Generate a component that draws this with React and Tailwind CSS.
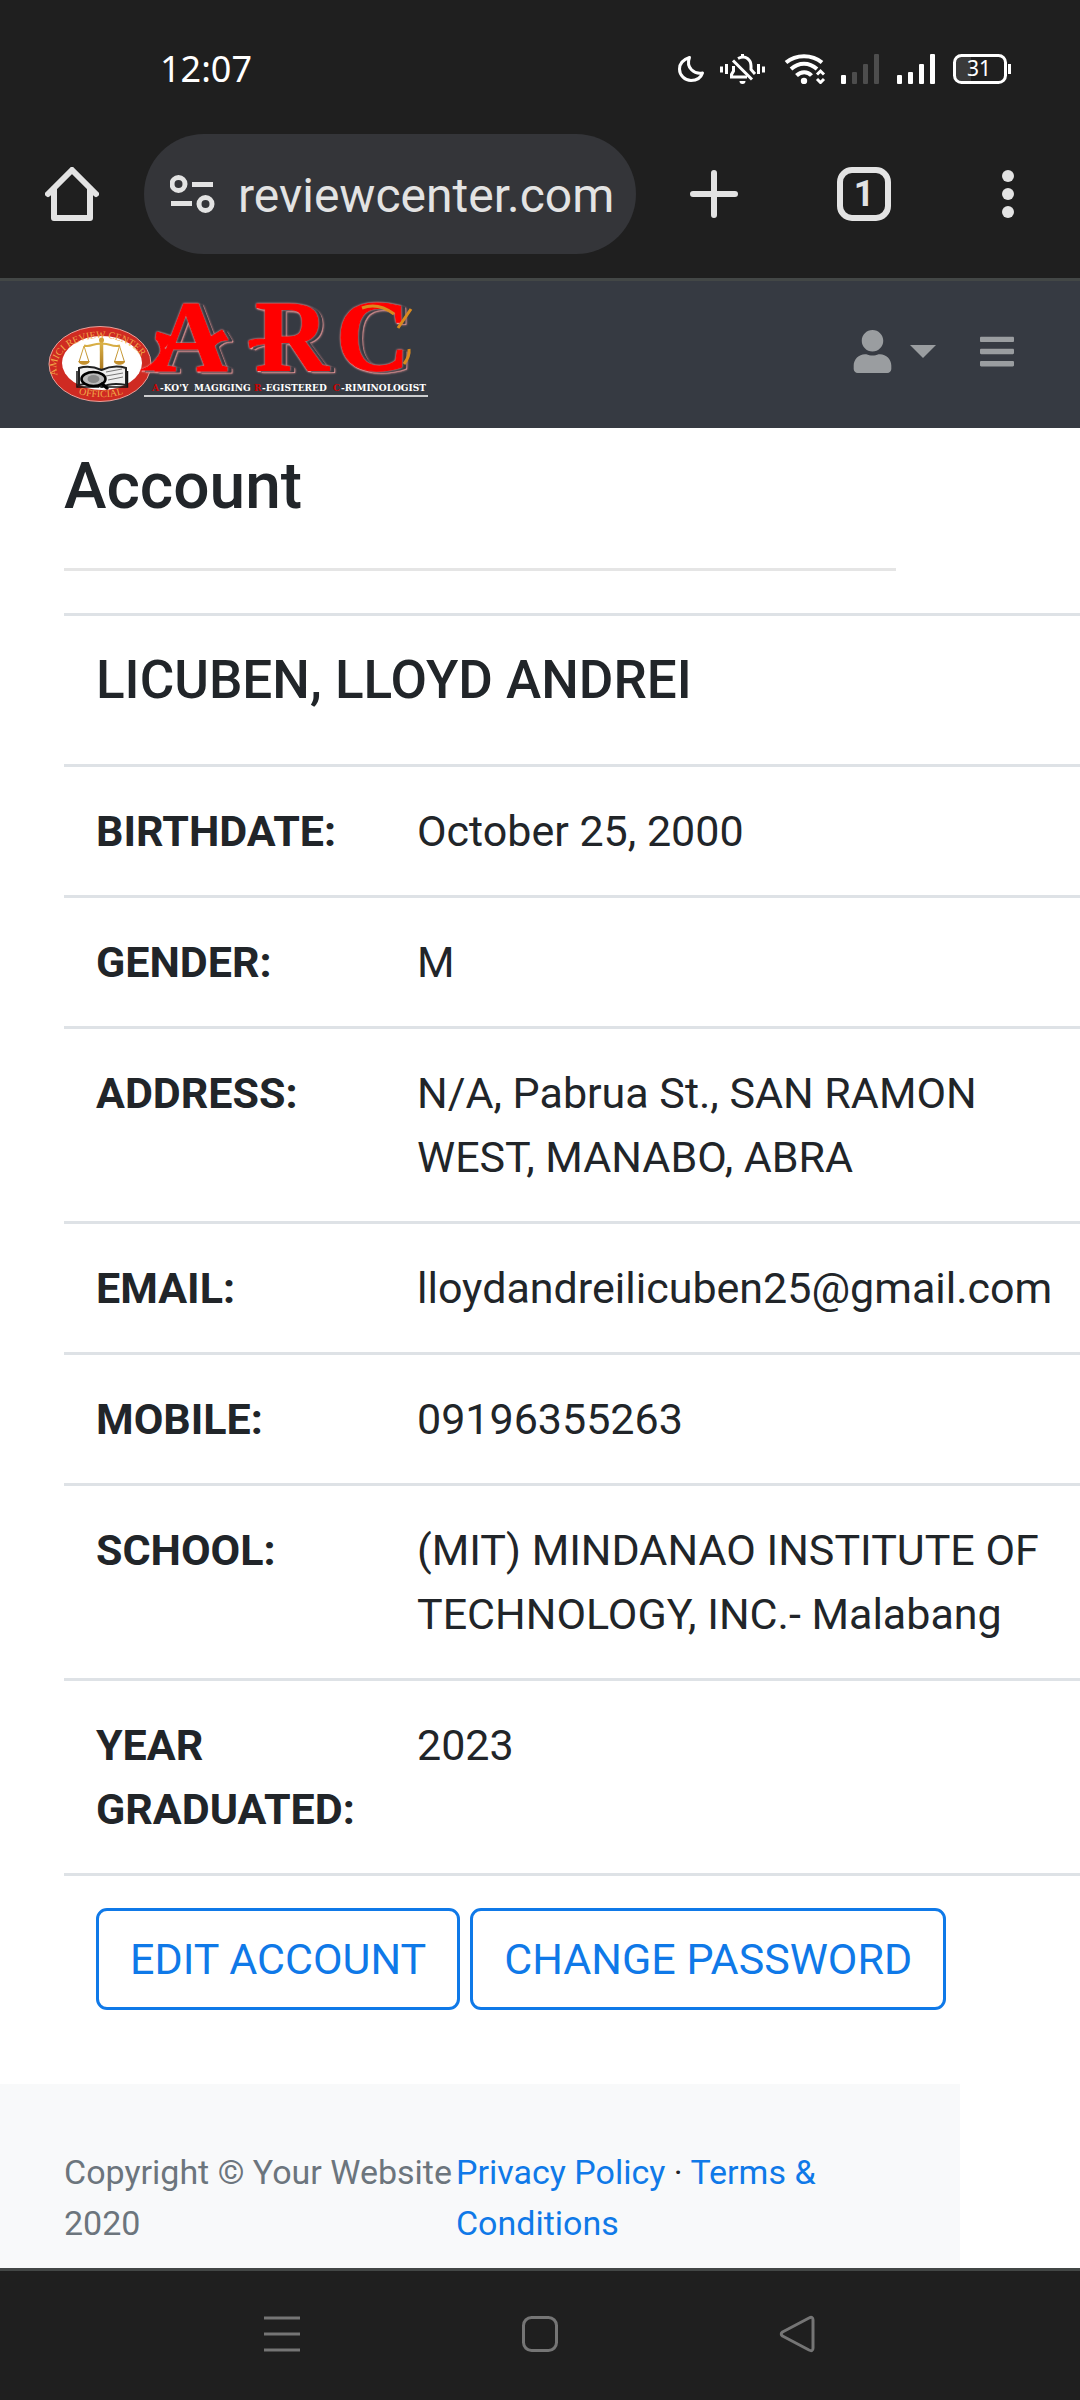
import { FaUser, FaBars } from "react-icons/fa";

const rows = [
  ["BIRTHDATE:", "October 25, 2000"],
  ["GENDER:", "M"],
  ["ADDRESS:", "N/A, Pabrua St., SAN RAMON WEST, MANABO, ABRA"],
  ["EMAIL:", "lloydandreilicuben25@gmail.com"],
  ["MOBILE:", "09196355263"],
  ["SCHOOL:", "(MIT) MINDANAO INSTITUTE OF TECHNOLOGY, INC.- Malabang"],
  ["YEAR GRADUATED:", "2023"],
];

function StatusIcons() {
  return (
    <svg width="336" height="30" viewBox="678 54 336 30" fill="none" stroke="#fff" aria-hidden="true">
      {/* moon */}
      <path d="M689.5 57.5C682 60 679.5 64.500 679.500 69C679.500 75.500 685 80.500 691 80.500C697 80.500 701 77.500 702.500 73C694.500 74.500 685.500 68 689.500 57.500Z" strokeWidth="3" strokeLinejoin="round" />
      {/* muted bell */}
      <g strokeWidth="3">
        <path d="M721.500 66.500v6M726.500 64v10M758.500 64v10M763.500 66.500v6" />
        <path d="M742.500 54v4" />
        <path d="M738 58.500C746 54.500 751 60 751 66V69.500L755 74" />
        <path d="M733.500 66V71L731.500 74.500V77H747" />
        <path d="M733 60.500L752 79.500" />
      </g>
      <path d="M739.500 81h6a3 3 0 0 1-6 0z" fill="#fff" stroke="none" />
      {/* wifi */}
      <g strokeWidth="4">
        <path d="M786 62.500C796 54 812 54 822 62.500" />
        <path d="M791 69C799 62 809 62 817 69" />
        <path d="M796.500 75.500C801 71 807.500 71 811.500 75.500" />
      </g>
      <circle cx="804" cy="81" r="3.200" fill="#fff" stroke="none" />
      <path d="M817 74.500l3.500-3.500l3.500 3.500M817 79l3.500 3.500l3.500-3.500" strokeWidth="3" />
      {/* signal strength, two SIMs */}
      <g stroke="none" fill="#fff">
        <rect x="841" y="75" width="5" height="9" rx="1" />
        <g fill="#4d4d4d">
          <rect x="852" y="72" width="5" height="12" rx="1" />
          <rect x="863" y="64" width="5" height="20" rx="1" />
          <rect x="874" y="54" width="5" height="30" rx="1" />
        </g>
        <rect x="897" y="75" width="5" height="9" rx="1" />
        <rect x="908" y="72" width="5" height="12" rx="1" />
        <rect x="919" y="64" width="5" height="20" rx="1" />
        <rect x="930" y="54" width="5" height="30" rx="1" />
      </g>
      {/* battery */}
      <path d="M971 56H960a6 6 0 0 0-6 6v14a6 6 0 0 0 6 6h11z" fill="#3a3a3a" stroke="none" />
      <rect x="954.500" y="55.500" width="51" height="27" rx="7" strokeWidth="3" />
      <path d="M1009.500 64v10" strokeWidth="3" />
      <text x="979" y="76" textAnchor="middle" fontSize="21" fill="#fff" stroke="none" className="font-['Noto_Sans',sans-serif]">31</text>
    </svg>
  );
}

function BrowserHeader() {
  return (
    <header className="border-b-3 border-[#434746] bg-[#1f1f1f]">
      <div className="flex h-[134px] items-center justify-between pt-1 pr-[66px] pl-40">
        <span className="font-['Noto_Sans',sans-serif] text-[36px] leading-[42px] text-white">12:07</span>
        <StatusIcons />
      </div>
      <div className="flex items-center px-[45px] pb-6">
        <button type="button" aria-label="Home" className="shrink-0">
          <svg width="54" height="54" viewBox="0 0 54 54" fill="none" stroke="#e3e3e3" strokeWidth="6" strokeLinecap="round" strokeLinejoin="round">
            <path d="M3 27L27 3L51 27" />
            <path d="M9 22V51H45V22" />
          </svg>
        </button>
        <div className="ml-[45px] flex h-[120px] min-w-0 flex-1 items-center rounded-full bg-[#343539] pl-[26px]">
          <svg width="46" height="40" viewBox="170 174 46 40" fill="none" stroke="#e3e3e3" strokeWidth="5" className="shrink-0" aria-hidden="true">
            <circle cx="178.500" cy="184" r="6.500" />
            <path d="M192 184.500h21M171 203.500h21" />
            <circle cx="205.500" cy="204" r="6.500" />
          </svg>
          <input aria-label="Address" readOnly value="reviewcenter.com" className="ml-[22px] min-w-0 flex-1 bg-transparent pt-1 text-[48px] leading-[60px] text-[#e3e3e3] outline-none" />
        </div>
        <button type="button" aria-label="New tab" className="ml-[51px] shrink-0">
          <svg width="54" height="54" viewBox="0 0 54 54" stroke="#e3e3e3" strokeWidth="6" strokeLinecap="round">
            <path d="M27 6v42M6 27h42" />
          </svg>
        </button>
        <button type="button" aria-label="Tabs" className="ml-24 flex size-[54px] shrink-0 items-center justify-center rounded-[15px] border-6 border-[#e3e3e3] text-[36px] leading-none font-bold text-[#e3e3e3]">
          1
        </button>
        <button type="button" aria-label="More" className="ml-[90px] shrink-0">
          <svg width="54" height="54" viewBox="0 0 54 54" fill="#e3e3e3">
            <circle cx="27" cy="9" r="6" />
            <circle cx="27" cy="27" r="6" />
            <circle cx="27" cy="45" r="6" />
          </svg>
        </button>
      </div>
    </header>
  );
}

function Logo() {
  return (
    <svg width="392" height="108" viewBox="40 297 392 108" role="img" aria-label="ARC Review Center" className="overflow-visible">
      <defs>
        <path id="sealTop" d="M59 378A44 30 0 1 1 142 378" />
        <path id="sealBottom" d="M62 385A46 26 0 0 0 140 385" />
        <linearGradient id="gold" gradientUnits="userSpaceOnUse" x1="0" y1="340" x2="0" y2="371">
          <stop offset="0" stopColor="#e0b84c" />
          <stop offset="1" stopColor="#a8741c" />
        </linearGradient>
      </defs>
      <ellipse cx="100" cy="364" rx="51" ry="37.500" fill="#cf2a22" stroke="#e8a09a" strokeWidth="1" />
      <ellipse cx="102" cy="363" rx="40" ry="27" fill="#fff" />
      <g fill="#f0a848" className="font-['Liberation_Serif',serif]" fontSize="10">
        <text><textPath href="#sealTop" startOffset="3">AMICI REVIEW CENTER</textPath></text>
        <text><textPath href="#sealBottom" startOffset="50%" textAnchor="middle">OFFICIAL</textPath></text>
      </g>
      {/* scales */}
      <g stroke="url(#gold)" fill="none">
        <path d="M101.500 340L101.600 371" strokeWidth="3.500" />
        <path d="M84 345.500C90 348 96 342 101.500 344C107 342 113 348 120 345.500" strokeWidth="2" />
        <path d="M84 346l-5 16M84 346l5 16M119.500 346l-5 16M119.500 346l5 16" strokeWidth="1" />
      </g>
      <path d="M78.500 361h11c0 5-11 5-11 0zM114 361h11c0 5-11 5-11 0z" fill="#c4902e" />
      <circle cx="101.500" cy="340" r="2.500" fill="#d3a33a" />
      {/* book with magnifier */}
      <path d="M79 368C88 365 95 367 101.500 370C108 367 116 365 126 368V385C116 383 108 384 102 387C95 384 88 383 79 385Z" fill="#eee" stroke="#222" strokeWidth="2" />
      <path d="M77 371V387H99M127.500 371V387H106" fill="none" stroke="#111" strokeWidth="1.500" />
      <path d="M106 372l16-3M106 376l17-3M108 380l15-3" stroke="#777" strokeWidth="1" />
      <ellipse cx="93.500" cy="379" rx="12" ry="7" fill="#bbb" stroke="#000" strokeWidth="2.500" />
      <ellipse cx="93.500" cy="379" rx="6" ry="4" fill="#888" />
      <path d="M102 384l5 4" stroke="#000" strokeWidth="3.500" strokeLinecap="round" />
      {/* wordmark with an outlined offset shadow */}
      <g
        fill="#f00"
        stroke="#f00"
        strokeWidth="1"
        className="[filter:drop-shadow(0_0_1px_#f7a0a0)_drop-shadow(4px_1px_0_#363a42)_drop-shadow(1px_1px_0_#ef9a9a)]"
      >
        <text x="154 255 336" y="371" fontSize="102" className="font-['Liberation_Serif',serif] font-bold">ARC</text>
        <path d="M141 370q14-4 22-22l4 2-4 20zM157 332l18 6-4 4q-8 6-10 10 0-8-5-13zM206 340l16-10 6 10q-8-1-14 6zM249 341q8-3 20-1v4q-12-1-19 4z" />
      </g>
      <path d="M362 308Q378 302 394 314" fill="none" stroke="#d98a1e" strokeWidth="3" />
      <path d="M398 328l13-19M404 364q6-8 5-15" fill="none" stroke="#d98a1e" strokeWidth="3" />
      <g fontSize="9" fill="#fff" className="font-['DejaVu_Serif',serif] font-bold">
        <text x="152" y="391" fill="#d00000">A</text>
        <text x="160" y="391">-KO'Y</text>
        <text x="194" y="391">MAGIGING</text>
        <text x="254" y="391" fill="#d00000">R</text>
        <text x="262" y="391">-EGISTERED</text>
        <text x="333" y="391" fill="#d00000">C</text>
        <text x="341" y="391">-RIMINOLOGIST</text>
      </g>
      <path d="M144 396h284" stroke="#fff" strokeWidth="1.500" />
    </svg>
  );
}

function SiteNav() {
  return (
    <nav className="flex items-center bg-[#363a42] pt-4 pr-[66px] pb-[23px] pl-10 text-[#9a9da0]">
      <a href="#home">
        <Logo />
      </a>
      <button type="button" aria-label="Account menu" className="ml-auto flex items-center gap-[18px]">
        <FaUser size={43} className="w-[39px]" />
        <svg width="26" height="13" viewBox="0 0 26 13" fill="currentColor" aria-hidden="true">
          <path d="M0 0h26L13 13z" />
        </svg>
      </button>
      <button type="button" aria-label="Toggle navigation" className="ml-11">
        <FaBars size={39} className="w-[34px]" />
      </button>
    </nav>
  );
}

function SystemNav() {
  return (
    <nav className="sticky bottom-0 flex justify-around border-t-3 border-[#434746] bg-[#1f1f1f] px-[153px] pt-11 pb-[47px]">
      <button type="button" aria-label="Recent apps">
        <svg width="38" height="38" viewBox="0 0 38 38" stroke="#757575" strokeWidth="3">
          <path d="M1 3h36M1 19h36M1 35h36" />
        </svg>
      </button>
      <button type="button" aria-label="Home screen">
        <svg width="38" height="38" viewBox="0 0 38 38" fill="none" stroke="#757575" strokeWidth="3">
          <rect x="2.500" y="2.500" width="33" height="33" rx="8" />
        </svg>
      </button>
      <button type="button" aria-label="Back">
        <svg width="38" height="38" viewBox="0 0 38 38" fill="none" stroke="#757575" strokeWidth="3" strokeLinejoin="round">
          <path d="M3.500 17L30 3Q34 1 34 5V33Q34 37 30 35L3.500 21Q1 19 3.500 17Z" />
        </svg>
      </button>
    </nav>
  );
}

export default function App() {
  return (
    <div className="flex min-h-screen flex-col bg-white font-[Roboto,sans-serif] text-[43px] leading-[64px] text-[#212529]">
      <BrowserHeader />
      <SiteNav />
      <main className="pt-5 pl-16">
        <h1 className="text-[64px] leading-[77px] font-medium">Account</h1>
        <hr className="mt-[43px] mr-[184px] mb-[42px] border-t-3 border-[#e5e5e5]" />
        <table className="w-full table-fixed border-collapse text-left">
          <colgroup>
            <col className="w-[321px]" />
            <col />
          </colgroup>
          <tbody>
            <tr className="border-t-3 border-[#dee2e6]">
              <td colSpan={2} className="px-8 pt-8 pb-[52px]">
                <h2 className="text-[53px] leading-[64px] font-medium">LICUBEN, LLOYD ANDREI</h2>
              </td>
            </tr>
            {rows.map(([label, value]) => (
              <tr key={label} className="border-t-3 border-[#dee2e6] align-top">
                <th scope="row" className="p-8 font-bold">{label}</th>
                <td className="py-8 pl-8">{value}</td>
              </tr>
            ))}
            <tr className="border-t-3 border-[#dee2e6]">
              <td colSpan={2} className="px-8 pt-8 pb-[74px]">
                <div className="flex flex-wrap gap-2.5">
                  <button type="button" className="rounded-[11px] border-3 border-[#0f79e8] px-[31px] py-4 text-[#0f79e8]">EDIT ACCOUNT</button>
                  <button type="button" className="rounded-[11px] border-3 border-[#0f79e8] px-[31px] py-4 text-[#0f79e8]">CHANGE PASSWORD</button>
                </div>
              </td>
            </tr>
          </tbody>
        </table>
      </main>
      <footer className="w-8/9 flex-1 bg-[#f8f9fa] px-16 pt-[63px] pb-4 text-[34px] leading-[51px]">
        <div className="flex justify-between">
          <div className="text-[#6c757d]">Copyright © Your Website 2020</div>
          <div>
            <a href="#privacy" className="text-[#0f79e8]">Privacy Policy</a> · <a href="#terms" className="text-[#0f79e8]">Terms &amp; Conditions</a>
          </div>
        </div>
      </footer>
      <SystemNav />
    </div>
  );
}
